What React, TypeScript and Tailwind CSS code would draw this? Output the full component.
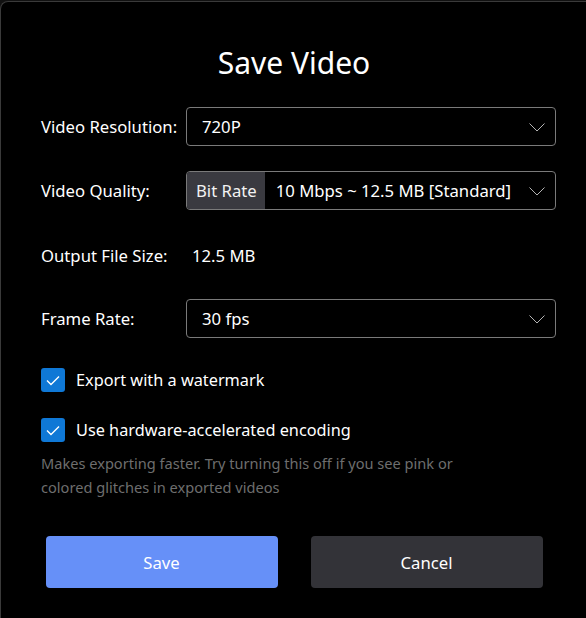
import React, { useState } from "react";

const font = { fontFamily: '"Segoe UI", "Noto Sans", "Open Sans", sans-serif' };

const Chevron = () => (
  <svg width="18" height="10" viewBox="0 0 18 10" fill="none" className="shrink-0">
    <path d="M1.5 1.5l7.5 7.5 7.5-7.5" stroke="#b4b4b4" strokeWidth="1" />
  </svg>
);

const Select: React.FC<{ value: string; prefix?: string }> = ({ value, prefix }) => (
  <div className="flex-1 h-[39px] flex items-center border border-[#7a7a7a] rounded-[4px] overflow-hidden">
    {prefix && (
      <div className="h-full flex items-center pl-[9px] pr-[8px] bg-[#3a3a40] text-[#f2f2f2]">{prefix}</div>
    )}
    <div className={`flex-1 ${prefix ? "pl-[11px]" : "pl-[15px]"} text-white whitespace-nowrap`}>
      {value}
    </div>
    <div className="pr-[9px]">
      <Chevron />
    </div>
  </div>
);

const Checkbox: React.FC<{ checked: boolean; onChange: () => void; label: string }> = ({
  checked,
  onChange,
  label,
}) => (
  <label className="flex items-center gap-[11px] cursor-pointer" onClick={onChange}>
    <span className="w-[24px] h-[24px] rounded-[3px] bg-[#0f78d6] flex items-center justify-center">
      {checked && (
        <svg width="14" height="11" viewBox="0 0 14 11" fill="none">
          <path d="M1 5.5l4 4 8-8" stroke="white" strokeWidth="1.4" />
        </svg>
      )}
    </span>
    <span className="text-white text-[16.3px]">{label}</span>
  </label>
);

export default function App() {
  const [watermark, setWatermark] = useState(true);
  const [hw, setHw] = useState(true);

  return (
    <div className="w-[586px] h-[618px] bg-[#111] overflow-hidden">
      <div
        style={font}
        className="w-[600px] h-[640px] mt-px bg-black border-l border-t border-[#3a3a3a] rounded-tl-[8px] text-[16.7px] leading-[24px]"
      >
        <div className="w-[585px]">
          <h1 className="text-center text-[30px] leading-[36px] text-white pt-[43px] ml-[1px]">Save Video</h1>

          <div className="pl-[40px] pr-[30px] mt-[26px]">
            <div className="flex items-center h-[39px]">
              <div className="w-[145px] text-white">Video Resolution:</div>
              <Select value="720P" />
            </div>
            <div className="flex items-center h-[39px] mt-[25px]">
              <div className="w-[145px] text-white">Video Quality:</div>
              <Select prefix="Bit Rate" value="10 Mbps ~ 12.5 MB [Standard]" />
            </div>
            <div className="flex items-center h-[39px] mt-[26px]">
              <div className="w-[151px] text-white">Output File Size:</div>
              <div className="text-white">12.5 MB</div>
            </div>
            <div className="flex items-center h-[39px] mt-[24px]">
              <div className="w-[145px] text-white">Frame Rate:</div>
              <Select value="30 fps" />
            </div>

            <div className="mt-[30px]">
              <Checkbox checked={watermark} onChange={() => setWatermark(!watermark)} label="Export with a watermark" />
            </div>
            <div className="mt-[26px]">
              <Checkbox checked={hw} onChange={() => setHw(!hw)} label="Use hardware-accelerated encoding" />
            </div>
            <p className="mt-[9px] text-[#6e6e6e] text-[14.6px] w-[430px]">
              Makes exporting faster. Try turning this off if you see pink or colored glitches in exported videos
            </p>
          </div>

          <div className="flex justify-center gap-[33px] mt-[37px] ml-[1px]">
            <button className="w-[232px] h-[52px] pt-[2px] rounded-[4px] bg-[#6690f8] text-white">Save</button>
            <button className="w-[232px] h-[52px] pt-[2px] rounded-[4px] bg-[#333338] text-white">Cancel</button>
          </div>
        </div>
      </div>
    </div>
  );
}
